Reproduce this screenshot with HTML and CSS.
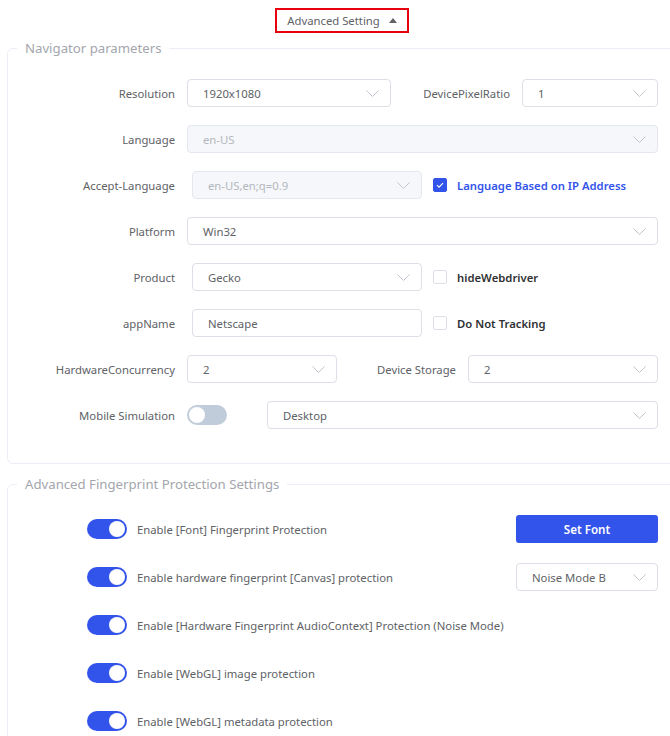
FILE: index.html
```html
<!DOCTYPE html>
<html lang="en">
<head>
  <meta charset="UTF-8">
  <title>Advanced Setting</title>
  <link rel="stylesheet" href="styles.css">
</head>
<body>
  <div class="page">
    <div class="top-bar">
      <span class="adv-btn">Advanced Setting <i class="caret-up"></i></span>
    </div>

    <fieldset class="group">
      <legend>Navigator parameters</legend>

      <div class="row">
        <label class="lbl">Resolution</label>
        <div class="field w-res">1920x1080
          <svg class="chev" viewBox="0 0 13 7"><path d="M0.5 0.5l6 6 6-6"/></svg>
        </div>
        <label class="lbl-mid">DevicePixelRatio</label>
        <div class="field grow">1
          <svg class="chev" viewBox="0 0 13 7"><path d="M0.5 0.5l6 6 6-6"/></svg>
        </div>
      </div>

      <div class="row">
        <label class="lbl">Language</label>
        <div class="field grow disabled">en-US
          <svg class="chev" viewBox="0 0 13 7"><path d="M0.5 0.5l6 6 6-6"/></svg>
        </div>
      </div>

      <div class="row">
        <label class="lbl">Accept-Language</label>
        <div class="field w-mid shift disabled">en-US,en;q=0.9
          <svg class="chev" viewBox="0 0 13 7"><path d="M0.5 0.5l6 6 6-6"/></svg>
        </div>
        <span class="check checked">
          <svg viewBox="0 0 14 14"><path d="M3.5 7.2l2.4 2.4 4.6-4.8"/></svg>
        </span>
        <span class="check-text blue">Language Based on IP Address</span>
      </div>

      <div class="row">
        <label class="lbl">Platform</label>
        <div class="field grow">Win32
          <svg class="chev" viewBox="0 0 13 7"><path d="M0.5 0.5l6 6 6-6"/></svg>
        </div>
      </div>

      <div class="row">
        <label class="lbl">Product</label>
        <div class="field w-mid shift">Gecko
          <svg class="chev" viewBox="0 0 13 7"><path d="M0.5 0.5l6 6 6-6"/></svg>
        </div>
        <span class="check"></span>
        <span class="check-text">hideWebdriver</span>
      </div>

      <div class="row">
        <label class="lbl">appName</label>
        <div class="field w-mid shift">Netscape</div>
        <span class="check"></span>
        <span class="check-text">Do Not Tracking</span>
      </div>

      <div class="row">
        <label class="lbl">HardwareConcurrency</label>
        <div class="field w-hc">2
          <svg class="chev" viewBox="0 0 13 7"><path d="M0.5 0.5l6 6 6-6"/></svg>
        </div>
        <label class="lbl-mid">Device Storage</label>
        <div class="field grow">2
          <svg class="chev" viewBox="0 0 13 7"><path d="M0.5 0.5l6 6 6-6"/></svg>
        </div>
      </div>

      <div class="row">
        <label class="lbl">Mobile Simulation</label>
        <span class="switch off"></span>
        <div class="field grow mobile">Desktop
          <svg class="chev" viewBox="0 0 13 7"><path d="M0.5 0.5l6 6 6-6"/></svg>
        </div>
      </div>
    </fieldset>

    <fieldset class="group">
      <legend>Advanced Fingerprint Protection Settings</legend>

      <div class="row toggle-row">
        <span class="switch"></span>
        <span class="toggle-text">Enable [Font] Fingerprint Protection</span>
        <button type="button" class="primary">Set Font</button>
      </div>

      <div class="row toggle-row">
        <span class="switch"></span>
        <span class="toggle-text">Enable hardware fingerprint [Canvas] protection</span>
        <div class="field w-side">Noise Mode B
          <svg class="chev" viewBox="0 0 13 7"><path d="M0.5 0.5l6 6 6-6"/></svg>
        </div>
      </div>

      <div class="row toggle-row">
        <span class="switch"></span>
        <span class="toggle-text">Enable [Hardware Fingerprint AudioContext] Protection (Noise Mode)</span>
      </div>

      <div class="row toggle-row">
        <span class="switch"></span>
        <span class="toggle-text">Enable [WebGL] image protection</span>
      </div>

      <div class="row toggle-row">
        <span class="switch"></span>
        <span class="toggle-text">Enable [WebGL] metadata protection</span>
      </div>
    </fieldset>
  </div>
</body>
</html>
```

FILE: styles.css
```css
* {
  box-sizing: border-box;
}

html, body {
  margin: 0;
  overflow: hidden;
}

body {
  font-family: "Noto Sans", "Open Sans", Arial, sans-serif;
  font-size: 11.3px;
  color: #606266;
  background-color: #fff;
}

.page {
  width: 684px;
  height: 736px;
  padding: 8px 7px 0;
}

.top-bar {
  display: flex;
  justify-content: center;
  margin-bottom: 5px;
}

.adv-btn {
  display: flex;
  align-items: center;
  justify-content: center;
  gap: 9px;
  width: 134px;
  height: 25px;
  border: 2px solid #e8000f;
  color: #606266;
}

.caret-up {
  width: 0;
  height: 0;
  border-left: 4px solid transparent;
  border-right: 4px solid transparent;
  border-bottom: 5px solid #606266;
}

.group {
  margin: 0 0 10px;
  padding: 21px 18px 34px 0;
  border: 1px solid #ebeef5;
  border-radius: 6px;
  min-width: 0;
}

.group legend {
  margin-left: 9px;
  padding: 0 8px;
  font-size: 13.2px;
  line-height: 20px;
  color: #a3a6ad;
}

.row {
  display: flex;
  align-items: center;
  height: 28px;
  margin-bottom: 18px;
}

.row:last-child {
  margin-bottom: 0;
}

.lbl {
  flex: none;
  width: 167px;
  margin-right: 12px;
  text-align: right;
}

.lbl-mid {
  flex: none;
  width: 119px;
  margin-right: 12px;
  text-align: right;
}

.field {
  display: flex;
  align-items: center;
  justify-content: space-between;
  height: 28px;
  padding: 0 11px 0 15px;
  border: 1px solid #dcdfe6;
  border-radius: 4px;
  color: #606266;
  background-color: #fff;
}

.field.disabled {
  background-color: #f5f7fa;
  border-color: #e4e7ed;
  color: #b4b7bd;
}

.chev {
  width: 13px;
  height: 7px;
  fill: none;
  stroke: #c0c4cc;
  stroke-width: 1;
}

.grow {
  flex: 1;
}

.w-res {
  width: 204px;
}

.w-mid {
  width: 230px;
}

.w-hc {
  width: 150px;
}

.w-side {
  width: 142px;
  margin-left: auto;
}

.shift {
  margin-left: 5px;
}

.mobile {
  margin-left: 40px;
}

.check {
  flex: none;
  width: 14px;
  height: 14px;
  margin: 0 10px 0 11px;
  border: 1px solid #dcdfe6;
  border-radius: 2px;
  background-color: #fff;
}

.check.checked {
  background-color: #3354ea;
  border-color: #3354ea;
}

.check svg {
  display: block;
  width: 12px;
  height: 12px;
  fill: none;
  stroke: #fff;
  stroke-width: 1.3;
}

.check-text {
  font-weight: 600;
  color: #303133;
}

.check-text.blue {
  color: #3354ea;
}

.switch {
  position: relative;
  flex: none;
  width: 40px;
  height: 20px;
  border-radius: 10px;
  background-color: #3354ea;
}

.switch::after {
  content: "";
  position: absolute;
  top: 2px;
  right: 2px;
  width: 16px;
  height: 16px;
  border-radius: 50%;
  background-color: #fff;
}

.switch.off {
  background-color: #c0ccda;
}

.switch.off::after {
  right: auto;
  left: 2px;
}

.toggle-row {
  padding-left: 79px;
  margin-bottom: 20px;
}

.toggle-text {
  margin-left: 10px;
}

.primary {
  width: 142px;
  height: 28px;
  margin-left: auto;
  border: none;
  border-radius: 3px;
  background-color: #3354ea;
  color: #fff;
  font-family: inherit;
  font-size: 11.6px;
  font-weight: 600;
  cursor: pointer;
}
```
